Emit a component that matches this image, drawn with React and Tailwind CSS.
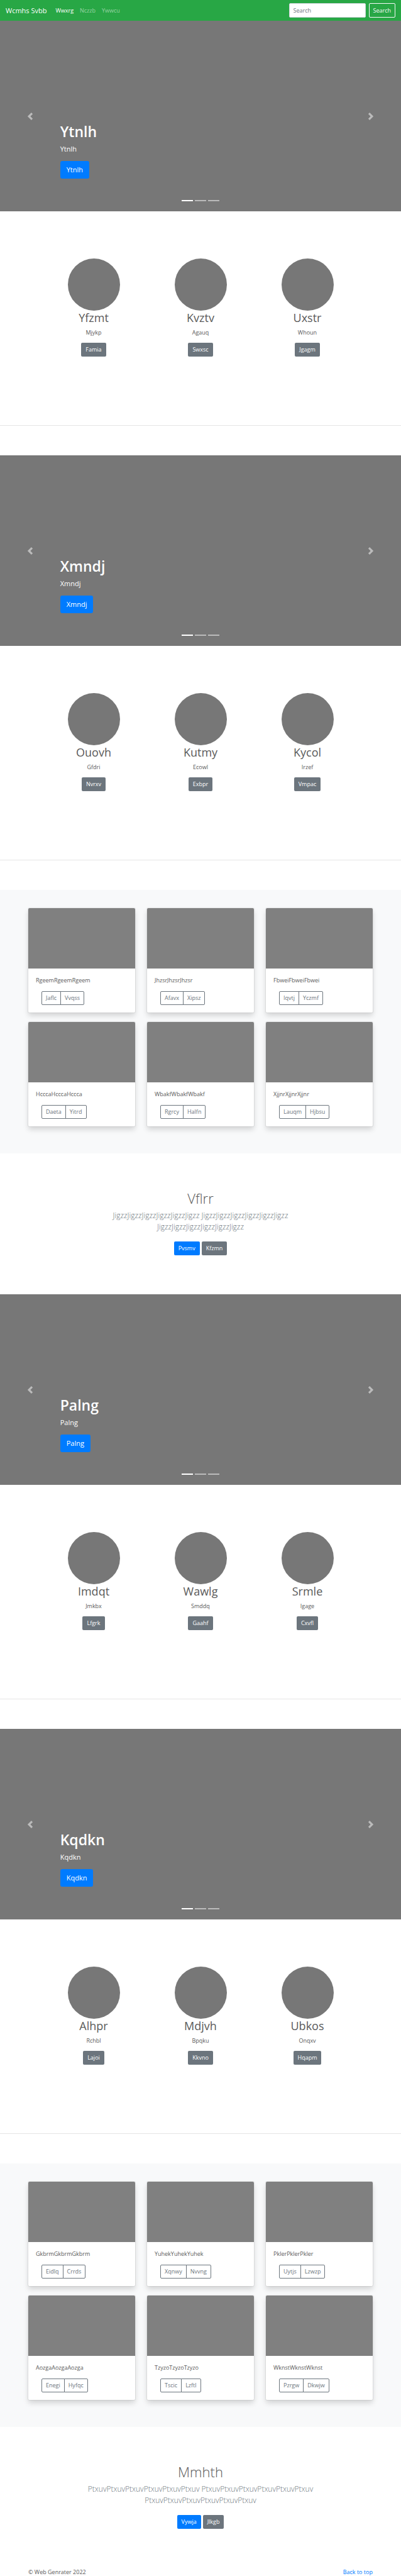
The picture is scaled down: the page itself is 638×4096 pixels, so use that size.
import React from "react";

const firstFeatures = [
  { title: "Yfzmt", text: "Mjykp", action: "Famia" },
  { title: "Kvztv", text: "Agauq", action: "Swxsc" },
  { title: "Uxstr", text: "Whoun", action: "Jgagm" },
];
const secondFeatures = [
  { title: "Ouovh", text: "Gfdri", action: "Nvrxv" },
  { title: "Kutmy", text: "Ecowl", action: "Exbpr" },
  { title: "Kycol", text: "Irzef", action: "Vmpac" },
];
const thirdFeatures = [
  { title: "Imdqt", text: "Jmkbx", action: "Lfgrk" },
  { title: "Wawlg", text: "Smddq", action: "Gaahf" },
  { title: "Srmle", text: "Igage", action: "Cxvfl" },
];
const fourthFeatures = [
  { title: "Alhpr", text: "Rchbl", action: "Lajoi" },
  { title: "Mdjvh", text: "Bpqku", action: "Kkvno" },
  { title: "Ubkos", text: "Onqxv", action: "Hqapm" },
];

const firstAlbum = [
  { text: "RgeemRgeemRgeem", actions: ["Jaflc", "Vvqss"] },
  { text: "JhzsrJhzsrJhzsr", actions: ["Afavx", "Xipsz"] },
  { text: "FbweiFbweiFbwei", actions: ["Iqvtj", "Yczmf"] },
  { text: "HcccaHcccaHccca", actions: ["Daeta", "Yitrd"] },
  { text: "WbakfWbakfWbakf", actions: ["Rgrcy", "Halfn"] },
  { text: "XjjnrXjjnrXjjnr", actions: ["Lauqm", "Hjbsu"] },
];
const secondAlbum = [
  { text: "GkbrmGkbrmGkbrm", actions: ["Eidlq", "Crrds"] },
  { text: "YuhekYuhekYuhek", actions: ["Xqnwy", "Nvvng"] },
  { text: "PklerPklerPkler", actions: ["Uytjs", "Lzwzp"] },
  { text: "AozgaAozgaAozga", actions: ["Enegi", "Hyfqc"] },
  { text: "TzyzoTzyzoTzyzo", actions: ["Tscic", "Lzftl"] },
  { text: "WknstWknstWknst", actions: ["Pzrgw", "Dkwjw"] },
];

function Navbar() {
  return (
    <header className="flex items-center justify-between bg-[#28a745] px-[9px] py-[5px] text-white">
      <nav className="flex items-center">
        <a href="#" className="mr-[14px] text-[11px] leading-[18px]">Wcmhs Svbb</a>
        <div className="flex gap-[10px]">
          <a href="#" className="leading-[14px] text-white">Wwxrg</a>
          <a href="#" className="leading-[14px] text-white/50">Nczzb</a>
          <a href="#" className="leading-[14px] text-white/50">Ywwcu</a>
        </div>
      </nav>
      <form className="flex gap-[5px]" onSubmit={(e) => e.preventDefault()}>
        <input
          type="search"
          aria-label="Search"
          placeholder="Search"
          className="h-[23px] w-[122px] rounded-[2px] border border-[#ced4da] bg-white px-[6px] text-[#495057] placeholder:text-[#6c757d]"
        />
        <button type="submit" className="h-[23px] rounded-[2px] border border-[#f8f9fa] px-[6px] text-[#f8f9fa]">
          Search
        </button>
      </form>
    </header>
  );
}

function Hero({ name }) {
  return (
    <section className="relative flex h-[303px] flex-col items-start justify-end bg-[#777] px-[15%] pb-[52px] text-white">
      <h1 className="mb-[5px] text-[23px] leading-[28px] font-semibold">{name}</h1>
      <p className="mb-[10px] text-[11px] leading-[18px] font-medium">{name}</p>
      <a href="#" className="rounded-[3px] bg-[#007bff] px-[10px] py-[5px] text-[11px] leading-[18px] font-medium">{name}</a>
      <button type="button" aria-label="Previous" className="absolute inset-y-0 left-0 flex w-[15%] items-center justify-center opacity-50">
        <svg viewBox="0 0 8 8" className="size-3 fill-white">
          <path d="M5.25 0l-4 4 4 4 1.5-1.5L4.25 4l2.5-2.5L5.25 0z" />
        </svg>
      </button>
      <button type="button" aria-label="Next" className="absolute inset-y-0 right-0 flex w-[15%] items-center justify-center opacity-50">
        <svg viewBox="0 0 8 8" className="size-3 fill-white">
          <path d="M2.75 0l-1.5 1.5L3.75 4l-2.5 2.5L2.75 8l4-4-4-4z" />
        </svg>
      </button>
      <div className="absolute inset-x-0 bottom-[16px] flex justify-center gap-[3px]">
        <button type="button" aria-label="Slide 1" className="h-[2px] w-[18px] bg-white" />
        <button type="button" aria-label="Slide 2" className="h-[2px] w-[18px] bg-white/50" />
        <button type="button" aria-label="Slide 3" className="h-[2px] w-[18px] bg-white/50" />
      </div>
    </section>
  );
}

function Features({ items }) {
  return (
    <section>
      <div className="grid grid-cols-3 px-16 pt-[75px] pb-[109px]">
        {items.map((item) => (
          <article key={item.title} className="flex flex-col items-center">
            <div className="size-[83px] rounded-full bg-[#777]" />
            <h2 className="mb-[5px] text-[18px] leading-[23px]">{item.title}</h2>
            <p className="mb-[9px] leading-[14px]">{item.text}</p>
            <a href="#" className="rounded-[2px] bg-[#6c757d] px-[7px] py-1 leading-[14px] text-white">{item.action}</a>
          </article>
        ))}
      </div>
      <hr className="mb-[47px] border-t border-black/10" />
    </section>
  );
}

function Album({ items }) {
  return (
    <section className="grid grid-cols-3 gap-x-[19px] gap-y-[15px] bg-[#f8f9fa] px-[45px] pt-[29px] pb-[43px]">
      {items.map((item) => (
        <article key={item.text} className="overflow-hidden rounded-[2px] bg-white shadow-[0_0_0_1px_rgba(0,0,0,0.06),0_5px_9px_rgba(0,0,0,0.15)]">
          <div className="h-[96px] bg-[#808080]" />
          <div className="p-[12px]">
            <p className="mb-[10px] leading-[14px]">{item.text}</p>
            <div className="ml-[9px] flex text-[#6c757d]">
              <button type="button" className="rounded-l-[2px] border border-[#6c757d] px-[6px] py-[3px] leading-[14px]">{item.actions[0]}</button>
              <button type="button" className="-ml-px rounded-r-[2px] border border-[#6c757d] px-[6px] py-[3px] leading-[14px]">{item.actions[1]}</button>
            </div>
          </div>
        </article>
      ))}
    </section>
  );
}

function CallToAction({ title, text, primary, secondary }) {
  return (
    <section className="flex flex-col items-center pt-[57px] pb-[62px] text-center">
      <h1 className="mb-[5px] text-[22px] leading-[28px] font-light">{title}</h1>
      <p className="mb-[14px] max-w-[368px] text-[12px] leading-[18px] font-light text-[#6c757d]">{text}</p>
      <div className="flex gap-[3px] text-white">
        <a href="#" className="rounded-[2px] bg-[#007bff] px-[7px] py-1 leading-[14px]">{primary}</a>
        <a href="#" className="rounded-[2px] bg-[#6c757d] px-[7px] py-1 leading-[14px]">{secondary}</a>
      </div>
    </section>
  );
}

export default function App() {
  return (
    <div className="bg-white font-['Open_Sans','Noto_Sans',sans-serif] text-[9px] text-[#5a5a5a]">
      <Navbar />
      <main>
        <Hero name="Ytnlh" />
        <Features items={firstFeatures} />
        <Hero name="Xmndj" />
        <Features items={secondFeatures} />
        <Album items={firstAlbum} />
        <CallToAction
          title="Vflrr"
          text="JigzzJigzzJigzzJigzzJigzzJigzz JigzzJigzzJigzzJigzzJigzzJigzz JigzzJigzzJigzzJigzzJigzzJigzz"
          primary="Pvsmv"
          secondary="Kfzmn"
        />
        <Hero name="Palng" />
        <Features items={thirdFeatures} />
        <Hero name="Kqdkn" />
        <Features items={fourthFeatures} />
        <Album items={secondAlbum} />
        <CallToAction
          title="Mmhth"
          text="PtxuvPtxuvPtxuvPtxuvPtxuvPtxuv PtxuvPtxuvPtxuvPtxuvPtxuvPtxuv PtxuvPtxuvPtxuvPtxuvPtxuvPtxuv"
          primary="Vywja"
          secondary="Jlkgb"
        />
      </main>
      <footer className="flex justify-between px-[45px] leading-[13px]">
        <p>© Web Genrater 2022</p>
        <a href="#" className="text-[#007bff]">Back to top</a>
      </footer>
    </div>
  );
}
